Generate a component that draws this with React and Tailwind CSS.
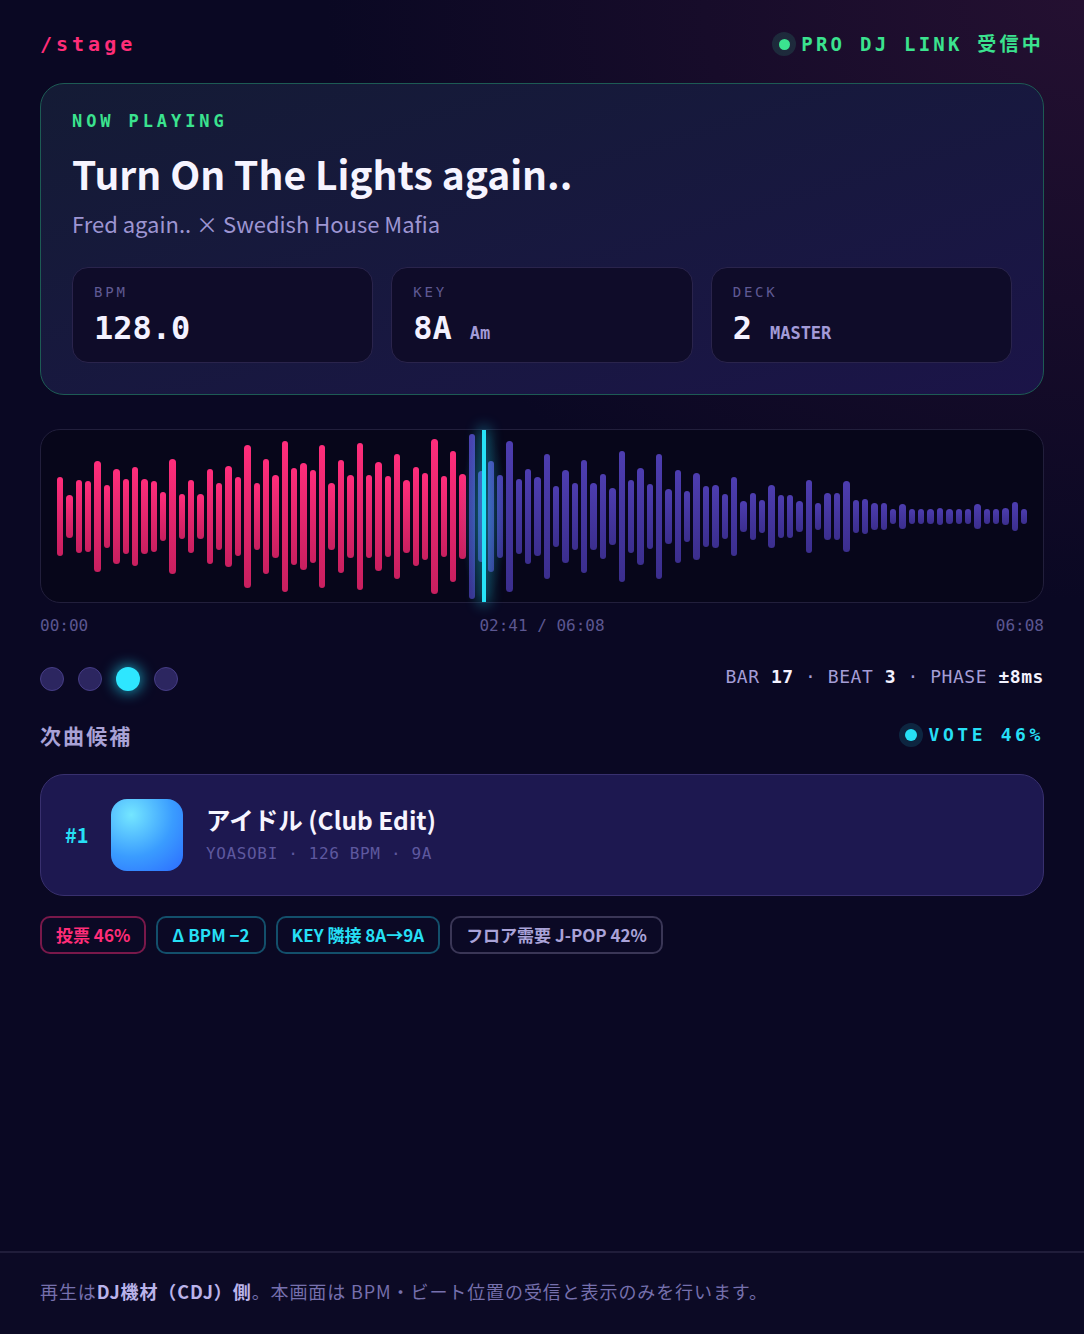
import React from 'react';

// waveform bar heights in px, left to right
const WAVE = [
  79, 43, 73, 71, 111, 63, 95, 75, 99, 75, 71, 49, 115, 45, 73, 45, 95, 67, 101, 79,
  143, 67, 115, 83, 151, 97, 107, 93, 143, 67, 113, 83, 147, 83, 109, 81, 125, 73, 99, 87,
  155, 81, 131, 85, 165, 91, 111, 83, 151, 75, 95, 79,
  125, 61, 93, 67, 113, 67, 85, 57, 131, 73, 97, 65, 125, 55, 93, 51, 87, 61,
  63, 45, 79, 31, 47, 33, 63, 43, 43, 31, 73, 27, 47, 47, 71, 33, 35, 27, 27, 15,
  25, 15, 15, 15, 17, 15, 15, 15, 25, 15, 15, 17, 29, 15,
];
const PLAYED = 44;
const PLAYHEAD = 44;

const StatBox = ({ label, value, tag }) => (
  <div className="h-24 flex-1 rounded-2xl border border-[#2a244c] bg-[#0f0c29] px-[21px] pt-[14px]">
    <div className="font-['DejaVu_Sans_Mono',monospace] text-[14px] leading-5 tracking-[0.2em] text-[#5f5a94]">
      {label}
    </div>
    <div className="mt-[6px] flex items-baseline leading-10">
      <span className="font-['DejaVu_Sans_Mono',monospace] text-[32px] font-bold text-[#f4f2ff]">{value}</span>
      {tag && (
        <span className="ml-[18px] font-['DejaVu_Sans_Mono',monospace] text-[17px] font-bold text-[#a39bd8]">{tag}</span>
      )}
    </div>
  </div>
);

const Waveform = () => (
  <div className="mt-[34px] h-[174px] rounded-[20px] border border-[#221f3c] bg-[#07061a] px-4">
    <div className="relative flex h-full items-center gap-[3px]">
      {WAVE.map((h, i) => (
        <div
          key={i}
          className={`flex-1 rounded-full bg-gradient-to-b ${
            i < PLAYED ? 'from-[#ff2d7b] to-[#c81f5f]' : 'from-[#4d3db0] to-[#3b2e8e]'
          }`}
          style={{ height: h }}
        />
      ))}
      {/* playhead */}
      <div
        className="absolute top-0 bottom-0 w-12 -translate-x-1/2 bg-[radial-gradient(closest-side,rgba(34,211,238,0.24),transparent)]"
        style={{ left: `${PLAYHEAD}%` }}
      />
      <div
        className="absolute top-0 bottom-0 w-1 -translate-x-1/2 bg-[#27e3f8] shadow-[0_0_14px_3px_rgba(34,211,238,0.45)]"
        style={{ left: `${PLAYHEAD}%` }}
      />
    </div>
  </div>
);

const Chip = ({ children, className }) => (
  <span className={`flex h-[38px] items-center rounded-[10px] border-2 bg-[#0b0925] px-[14px] text-[17px] font-bold ${className}`}>
    {children}
  </span>
);

export default function App() {
  return (
    <div className="flex min-h-screen flex-col bg-[#0a0823] bg-[radial-gradient(ellipse_70%_45%_at_100%_0%,#241031_0%,transparent_100%)] font-['Noto_Sans_CJK_JP',sans-serif]">
      <main className="flex-1 px-10 pt-8">
        {/* header */}
        <header className="flex h-6 items-center justify-between">
          <span className="font-['DejaVu_Sans_Mono',monospace] text-[20px] font-bold tracking-[0.2em] text-[#ff2d78]">/stage</span>
          <div className="flex items-center gap-[5px]">
            <span className="flex h-6 w-6 items-center justify-center rounded-full bg-[#34d399]/15">
              <span className="h-[11px] w-[11px] rounded-full bg-[#3be38f]" />
            </span>
            <span className="font-['DejaVu_Sans_Mono','Noto_Sans_CJK_JP',monospace] text-[19px] font-bold tracking-[0.17em] text-[#3be38f]">
              PRO DJ LINK 受信中
            </span>
          </div>
        </header>

        {/* now playing */}
        <section className="mt-[27px] rounded-3xl border border-[#1d5b54] bg-gradient-to-br from-[#141b35] to-[#1b1448] px-[31px] pt-[25px] pb-[31px]">
          <div className="font-['DejaVu_Sans_Mono',monospace] text-[17px] font-bold leading-6 tracking-[0.23em] text-[#3be38f]">
            NOW PLAYING
          </div>
          <h1 className="mt-4 text-[39px] font-bold leading-[48px] text-[#f6f4ff]">Turn On The Lights again..</h1>
          <p className="mt-[10px] text-[22px] leading-8 text-[#9d95d2]">Fred again.. × Swedish House Mafia</p>
          <div className="mt-7 flex gap-[18px]">
            <StatBox label="BPM" value="128.0" />
            <StatBox label="KEY" value="8A" tag="Am" />
            <StatBox label="DECK" value="2" tag="MASTER" />
          </div>
        </section>

        <Waveform />

        <div className="mt-[13px] flex justify-between font-['DejaVu_Sans_Mono',monospace] text-[16px] leading-5 text-[#5c5791]">
          <span>00:00</span>
          <span>02:41 / 06:08</span>
          <span>06:08</span>
        </div>

        {/* beat dots + position */}
        <div className="mt-[31px] flex h-6 items-center justify-between">
          <div className="flex gap-[14px]">
            <span className="h-6 w-6 rounded-full border border-[#463d86] bg-[#2c2660]" />
            <span className="h-6 w-6 rounded-full border border-[#463d86] bg-[#2c2660]" />
            <span className="h-6 w-6 rounded-full bg-[#2ee6ff] shadow-[0_0_14px_2px_rgba(34,230,255,0.6)]" />
            <span className="h-6 w-6 rounded-full border border-[#463d86] bg-[#2c2660]" />
          </div>
          <div className="mb-1 font-['DejaVu_Sans_Mono',monospace] text-[18px] leading-6 tracking-[0.03em] text-[#a49dd6]">
            BAR <b className="text-[#f4f2ff]">17</b> · BEAT <b className="text-[#f4f2ff]">3</b> · PHASE{' '}
            <b className="text-[#f4f2ff]">±8ms</b>
          </div>
        </div>

        {/* next candidates */}
        <div className="mt-[30px] flex h-7 items-center justify-between">
          <h2 className="text-[21px] font-bold leading-7 tracking-[0.1em] text-[#a9a2d6]">次曲候補</h2>
          <div className="flex items-center gap-[6px]">
            <span className="flex h-6 w-6 items-center justify-center rounded-full bg-[#22d3ee]/15">
              <span className="h-3 w-3 rounded-full bg-[#26dff5]" />
            </span>
            <span className="font-['DejaVu_Sans_Mono',monospace] text-[18px] font-bold leading-6 tracking-[0.2em] text-[#26dff5]">VOTE 46%</span>
          </div>
        </div>

        <div className="mt-[25px] flex h-[122px] items-center rounded-3xl border border-[#38306e] bg-[#1d1850] pl-6">
          <span className="w-[24px] text-[20px] font-bold text-[#26dff5]">#1</span>
          <div className="ml-[22px] h-[72px] w-[72px] rounded-2xl bg-[radial-gradient(circle_at_28%_22%,#74e6ff_0%,#3a9cff_55%,#2c6cff_100%)]" />
          <div className="ml-[23px]">
            <div className="text-[24.5px] font-bold leading-8 text-[#f6f4ff]">アイドル (Club Edit)</div>
            <div className="mt-[6px] font-['DejaVu_Sans_Mono',monospace] text-[16px] leading-6 tracking-[0.04em] text-[#5e589f]">
              YOASOBI · 126 BPM · 9A
            </div>
          </div>
        </div>

        <div className="mt-5 flex gap-[10px]">
          <Chip className="border-[#ff2d78]/45 text-[#ff2d78]">投票 46%</Chip>
          <Chip className="border-[#22d3ee]/35 text-[#26dff5]">Δ BPM −2</Chip>
          <Chip className="border-[#22d3ee]/35 text-[#26dff5]">KEY 隣接 8A→9A</Chip>
          <Chip className="border-[#3a3656] text-[#aaa3d8]">フロア需要 J-POP 42%</Chip>
        </div>
      </main>

      <footer className="border-t-2 border-[#201d3a] bg-[#0c0a25] px-10 pt-6 pb-[29px] text-[18px] leading-7 tracking-[0.05em] text-[#7670ad]">
        再生は<b className="text-[#bab3ea]">DJ機材（CDJ）側</b>。本画面は BPM・ビート位置の受信と表示のみを行います。
      </footer>
    </div>
  );
}
